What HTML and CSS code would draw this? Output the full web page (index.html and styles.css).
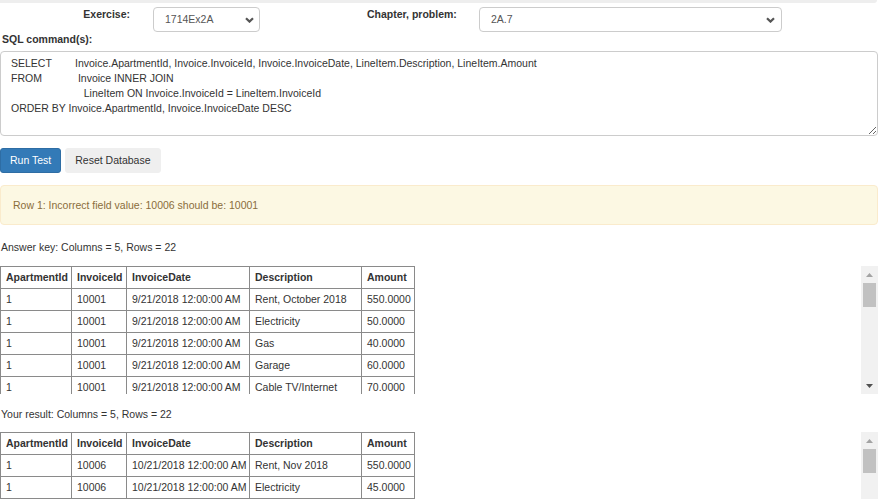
FILE: index.html
```html
<!DOCTYPE html>
<html>
<head>
<meta charset="utf-8">
<title>SQL Test</title>
<link rel="stylesheet" href="styles.css">
</head>
<body>
<div class="page">
  <div class="band"></div>
  <div class="form-row">
    <div class="label label-ex">Exercise:</div>
    <div class="select select-ex">
      <span>1714Ex2A</span>
      <svg class="chev" width="9" height="6" viewBox="0 0 9 6"><path d="M1 1.2 L4.5 4.6 L8 1.2" fill="none" stroke="#555" stroke-width="2.2"/></svg>
    </div>
    <div class="label label-ch">Chapter, problem:</div>
    <div class="select select-ch">
      <span>2A.7</span>
      <svg class="chev" width="9" height="6" viewBox="0 0 9 6"><path d="M1 1.2 L4.5 4.6 L8 1.2" fill="none" stroke="#555" stroke-width="2.2"/></svg>
    </div>
  </div>
  <div class="label sql-label">SQL command(s):</div>
  <textarea class="sql" spellcheck="false">SELECT	Invoice.ApartmentId, Invoice.InvoiceId, Invoice.InvoiceDate, LineItem.Description, LineItem.Amount
FROM	 Invoice INNER JOIN
	   LineItem ON Invoice.InvoiceId = LineItem.InvoiceId
ORDER BY Invoice.ApartmentId, Invoice.InvoiceDate DESC</textarea>
  <div class="buttons">
    <button class="btn btn-primary">Run Test</button>
    <button class="btn btn-default">Reset Database</button>
  </div>
  <div class="alert">Row 1: Incorrect field value: 10006 should be: 10001</div>
  <p class="caption">Answer key: Columns = 5, Rows = 22</p>
  <div class="scroller">
    <div class="scroll-content">
      <table class="grid">
        <colgroup><col class="c1"><col class="c2"><col class="c3"><col class="c4"><col class="c5"></colgroup>
        <tr><th>ApartmentId</th><th>InvoiceId</th><th>InvoiceDate</th><th>Description</th><th>Amount</th></tr>
        <tr><td>1</td><td>10001</td><td>9/21/2018 12:00:00 AM</td><td>Rent, October 2018</td><td>550.0000</td></tr>
        <tr><td>1</td><td>10001</td><td>9/21/2018 12:00:00 AM</td><td>Electricity</td><td>50.0000</td></tr>
        <tr><td>1</td><td>10001</td><td>9/21/2018 12:00:00 AM</td><td>Gas</td><td>40.0000</td></tr>
        <tr><td>1</td><td>10001</td><td>9/21/2018 12:00:00 AM</td><td>Garage</td><td>60.0000</td></tr>
        <tr><td>1</td><td>10001</td><td>9/21/2018 12:00:00 AM</td><td>Cable TV/Internet</td><td>70.0000</td></tr>
      </table>
    </div>
    <div class="scrollbar">
      <div class="sb-btn"><svg width="7" height="4" viewBox="0 0 7 4"><polygon points="0,4 3.5,0 7,4" fill="#a3a3a3"/></svg></div>
      <div class="sb-thumb"></div>
      <div class="sb-track"></div>
      <div class="sb-btn"><svg width="7" height="4" viewBox="0 0 7 4"><polygon points="0,0 7,0 3.5,4" fill="#505050"/></svg></div>
    </div>
  </div>
  <p class="caption">Your result: Columns = 5, Rows = 22</p>
  <div class="scroller scroller-last">
    <div class="scroll-content">
      <table class="grid">
        <colgroup><col class="c1"><col class="c2"><col class="c3"><col class="c4"><col class="c5"></colgroup>
        <tr><th>ApartmentId</th><th>InvoiceId</th><th>InvoiceDate</th><th>Description</th><th>Amount</th></tr>
        <tr><td>1</td><td>10006</td><td>10/21/2018 12:00:00 AM</td><td>Rent, Nov 2018</td><td>550.0000</td></tr>
        <tr><td>1</td><td>10006</td><td>10/21/2018 12:00:00 AM</td><td>Electricity</td><td>45.0000</td></tr>
        <tr class="empty-row"><td></td><td></td><td></td><td></td><td></td></tr>
      </table>
    </div>
    <div class="scrollbar">
      <div class="sb-btn"><svg width="7" height="4" viewBox="0 0 7 4"><polygon points="0,4 3.5,0 7,4" fill="#a3a3a3"/></svg></div>
      <div class="sb-thumb"></div>
      <div class="sb-track"></div>
    </div>
  </div>
</div>
</body>
</html>
```
FILE: styles.css
```css
html, body {
  margin: 0;
  padding: 0;
  background: #fff;
}
body {
  font-family: "Liberation Sans", Arial, sans-serif;
  font-size: 10.5px;
  line-height: 15px;
  color: #333;
  overflow: hidden;
}
.page {
  width: 878px;
}
.band {
  width: 877px;
  height: 3px;
  background: #eee;
  border-radius: 0 0 4px 0;
}
.form-row {
  display: flex;
  align-items: flex-start;
  margin-top: 4px;
  height: 25px;
}
.label {
  font-weight: bold;
  color: #333;
}
.label-ex {
  width: 130px;
  text-align: right;
}
.select {
  box-sizing: border-box;
  height: 25px;
  border: 1px solid #ccc;
  border-radius: 4px;
  background: #fff;
  display: flex;
  align-items: center;
  justify-content: space-between;
  padding: 0 5px 0 11px;
  color: #555;
}
.select-ex {
  margin-left: 23px;
  width: 107px;
}
.label-ch {
  margin-left: 107px;
  width: 112px;
}
.select-ch {
  width: 303px;
  padding-right: 6px;
}
.chev {
  display: block;
}
.sql-label {
  margin: 0 0 0 2px;
  height: 15px;
}
.sql {
  display: block;
  box-sizing: border-box;
  width: 878px;
  height: 85px;
  margin: 4px 0 0 0;
  padding: 4px 10px;
  border: 1px solid #ccc;
  border-radius: 4px;
  font-family: "Liberation Sans", Arial, sans-serif;
  font-size: 10.5px;
  line-height: 15px;
  color: #333;
  tab-size: 64px;
  white-space: pre;
  overflow: hidden;
  outline: none;
}
.buttons {
  display: flex;
  gap: 4px;
  margin-top: 12px;
}
.btn {
  box-sizing: border-box;
  height: 25px;
  padding: 4px 9px;
  border: 1px solid transparent;
  border-radius: 3px;
  font-family: "Liberation Sans", Arial, sans-serif;
  font-size: 10.5px;
  line-height: 15px;
  cursor: pointer;
}
.btn-primary {
  background: #337ab7;
  border-color: #2e6da4;
  color: #fff;
}
.btn-default {
  background: #efefef;
  border-color: #efefef;
  color: #333;
}
.alert {
  box-sizing: border-box;
  width: 878px;
  margin-top: 12px;
  padding: 12px 12px 11px 12px;
  background: #fcf8e3;
  border: 1px solid #faebcc;
  border-radius: 4px;
  color: #8a6d3b;
}
.caption {
  margin: 15px 0 11px 1px;
  color: #333;
}
.scroller + .caption {
  margin: 13px 0 10px 1px;
}
.scroller {
  display: flex;
  width: 878px;
  height: 128px;
}
.scroller-last {
  height: 68px;
}
.scroll-content {
  flex: 1;
  overflow: hidden;
}
.grid {
  border-collapse: separate;
  border-spacing: 0;
  table-layout: fixed;
  width: 415px;
  border-top: 1px solid #8a8a8a;
  border-left: 1px solid #8a8a8a;
}
.c1 { width: 71px; }
.c2 { width: 55px; }
.c3 { width: 123px; }
.c4 { width: 112px; }
.c5 { width: 53px; }
.grid th, .grid td {
  border-right: 1px solid #8a8a8a;
  border-bottom: 1px solid #8a8a8a;
  padding: 3px 4px 3px 5px;
  height: 15px;
  line-height: 15px;
  text-align: left;
  white-space: nowrap;
  overflow: hidden;
  color: #333;
}
.grid th {
  font-weight: bold;
}
.scrollbar {
  width: 17px;
  background: #f1f1f1;
  display: flex;
  flex-direction: column;
}
.sb-btn {
  height: 17px;
  flex: none;
  display: flex;
  align-items: center;
  justify-content: center;
}
.sb-btn svg {
  display: block;
}
.sb-thumb {
  height: 24px;
  flex: none;
  margin: 0 2px;
  background: #c1c1c1;
}
.sb-track {
  flex: 1;
}
```
